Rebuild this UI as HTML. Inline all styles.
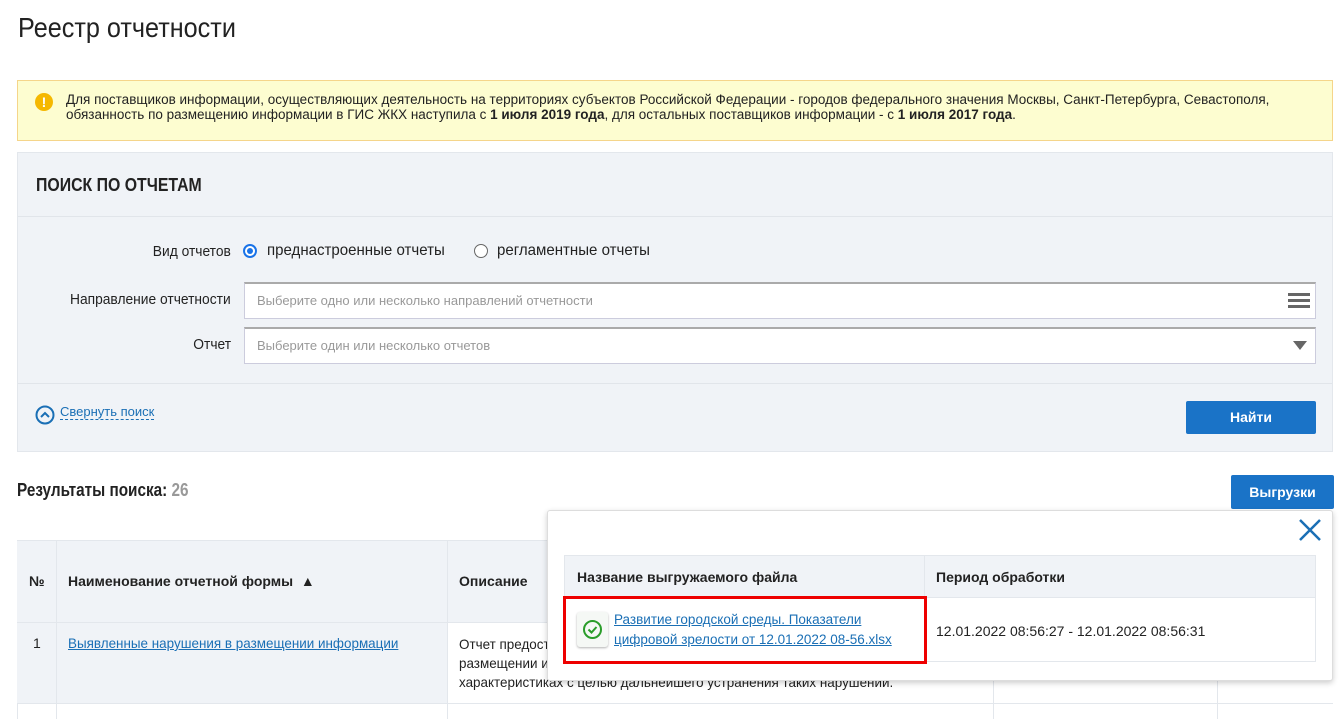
<!DOCTYPE html>
<html><head><meta charset="utf-8"><style>
*{box-sizing:border-box;margin:0;padding:0}
body{width:1342px;height:719px;overflow:hidden;background:#fff;font-family:"Liberation Sans",sans-serif;color:#222;position:relative;font-size:14px}
.a{position:absolute}
a{color:#1a6fb5}
.lbl{position:absolute;right:1111px;font-size:15px;transform:scaleX(.92);transform-origin:right;white-space:nowrap}
</style></head><body>
<div class="a" style="left:18px;top:12px;font-size:28px;transform:scaleX(.9);transform-origin:left">Реестр отчетности</div>
<div class="a" style="left:17px;top:80px;width:1316px;height:61px;background:#fdfdd0;border:1px solid #f5d58a"></div>
<div class="a" style="left:35px;top:93px;width:18px;height:18px;border-radius:50%;background:#f5b800;color:#fff;font-weight:bold;font-size:14px;text-align:center;line-height:18px">!</div>
<div class="a" style="left:66px;top:92px;font-size:13.5px;line-height:15px;width:1260px">Для поставщиков информации, осуществляющих деятельность на территориях субъектов Российской Федерации - городов федерального значения Москвы, Санкт-Петербурга, Севастополя, обязанность по размещению информации в ГИС ЖКХ наступила с <b>1 июля 2019 года</b>, для остальных поставщиков информации - с <b>1 июля 2017 года</b>.</div>
<div class="a" style="left:17px;top:152px;width:1316px;height:300px;background:#f0f3f7;border:1px solid #e3e7ec"></div>
<div class="a" style="left:18px;top:216px;width:1314px;height:1px;background:#e1e5ea"></div>
<div class="a" style="left:18px;top:383px;width:1314px;height:1px;background:#e1e5ea"></div>
<div class="a" style="left:36px;top:175px;font-size:18px;font-weight:bold;transform:scaleX(.88);transform-origin:left">ПОИСК ПО ОТЧЕТАМ</div>
<div class="lbl" style="top:243px">Вид отчетов</div>
<div class="a" style="left:243px;top:244px;width:14px;height:14px;border-radius:50%;border:2px solid #1a73e8;background:#fff"><div style="margin:2px;width:6px;height:6px;border-radius:50%;background:#1a73e8"></div></div>
<div class="a" style="left:267px;top:242px;font-size:16px;transform:scaleX(.94);transform-origin:left">преднастроенные отчеты</div>
<div class="a" style="left:474px;top:244px;width:14px;height:14px;border-radius:50%;border:1px solid #666;background:#fff"></div>
<div class="a" style="left:497px;top:242px;font-size:16px;transform:scaleX(.94);transform-origin:left">регламентные отчеты</div>
<div class="lbl" style="top:291px">Направление отчетности</div>
<div class="a" style="left:244px;top:282px;width:1072px;height:37px;background:#fff;border:1px solid #ccd;border-top:2px solid #aaa"></div>
<div class="a" style="left:257px;top:293px;font-size:13px;color:#999">Выберите одно или несколько направлений отчетности</div>
<div class="a" style="left:1288px;top:293px;width:22px;height:3px;background:#666;box-shadow:0 6px 0 #666,0 12px 0 #666"></div>
<div class="lbl" style="top:336px">Отчет</div>
<div class="a" style="left:244px;top:327px;width:1072px;height:37px;background:#fff;border:1px solid #ccd;border-top:2px solid #aaa"></div>
<div class="a" style="left:257px;top:338px;font-size:13px;color:#999">Выберите один или несколько отчетов</div>
<div class="a" style="left:1293px;top:341px;border-left:7px solid transparent;border-right:7px solid transparent;border-top:9px solid #666"></div>
<svg class="a" style="left:35px;top:405px" width="20" height="20"><circle cx="10" cy="10" r="8.5" fill="none" stroke="#1a6fb5" stroke-width="2"/><path d="M6 12l4-4 4 4" fill="none" stroke="#1a6fb5" stroke-width="2"/></svg>
<div class="a" style="left:60px;top:404px;font-size:13px;color:#1a6fb5;border-bottom:1px dashed #1a6fb5">Свернуть поиск</div>
<div class="a" style="left:1186px;top:401px;width:130px;height:33px;background:#1a73c7;border-radius:2px;color:#fff;font-weight:bold;font-size:14px;text-align:center;line-height:33px">Найти</div>
<div class="a" style="left:17px;top:480px;font-size:18px;font-weight:bold;transform:scaleX(.85);transform-origin:left">Результаты поиска: <span style="color:#999">26</span></div>
<div class="a" style="left:1231px;top:475px;width:103px;height:34px;background:#1a73c7;border-radius:2px;color:#fff;font-weight:bold;font-size:14px;text-align:center;line-height:34px">Выгрузки</div>
<div class="a" style="left:17px;top:540px;width:1316px;height:179px;border-left:1px solid #e3e7ec"></div>
<div class="a" style="left:17px;top:540px;width:1316px;height:83px;background:#f0f3f7;border-top:1px solid #e3e7ec;border-bottom:1px solid #e3e7ec"></div>
<div class="a" style="left:17px;top:623px;width:430px;height:80px;background:#f0f3f7"></div>
<div class="a" style="left:17px;top:703px;width:1316px;height:1px;background:#e3e7ec"></div>
<div class="a" style="left:56px;top:540px;width:1px;height:179px;background:#e3e7ec"></div>
<div class="a" style="left:447px;top:540px;width:1px;height:179px;background:#e3e7ec"></div>
<div class="a" style="left:993px;top:540px;width:1px;height:179px;background:#e3e7ec"></div>
<div class="a" style="left:1217px;top:540px;width:1px;height:179px;background:#e3e7ec"></div>
<div class="a" style="left:29px;top:573px;font-weight:bold;font-size:14px">№</div>
<div class="a" style="left:68px;top:573px;font-weight:bold;font-size:14px">Наименование отчетной формы <span style="font-size:14px">&nbsp;▲</span></div>
<div class="a" style="left:459px;top:573px;font-weight:bold;font-size:14px">Описание</div>
<div class="a" style="left:33px;top:635px;font-size:14px">1</div>
<div class="a" style="left:68px;top:635px;font-size:14px;transform:scaleX(.96);transform-origin:left"><a style="text-decoration:underline">Выявленные нарушения в размещении информации</a></div>
<div class="a" style="left:459px;top:635px;font-size:14px;line-height:19px;width:560px;transform:scaleX(.96);transform-origin:left">Отчет предоставляет информацию о выявленных нарушениях в<br>размещении информации поставщиками, о нарушенных<br>характеристиках с целью дальнейшего устранения таких нарушений.</div>
<div class="a" style="left:547px;top:510px;width:786px;height:171px;background:#fff;border:1px solid #ddd;border-radius:3px;box-shadow:0 2px 6px rgba(0,0,0,.2)"></div>
<svg class="a" style="left:1298px;top:518px" width="24" height="24"><path d="M2 2L22 22M22 2L2 22" stroke="#1a6fb5" stroke-width="2.5"/></svg>
<div class="a" style="left:564px;top:555px;width:752px;height:107px;border:1px solid #e3e7ec"></div>
<div class="a" style="left:565px;top:556px;width:750px;height:42px;background:#f0f3f7;border-bottom:1px solid #e3e7ec"></div>
<div class="a" style="left:924px;top:556px;width:1px;height:105px;background:#e3e7ec"></div>
<div class="a" style="left:577px;top:569px;font-weight:bold;font-size:14px">Название выгружаемого файла</div>
<div class="a" style="left:936px;top:569px;font-weight:bold;font-size:14px">Период обработки</div>
<div class="a" style="left:563px;top:596px;width:364px;height:68px;border:3px solid #e00"></div>
<div class="a" style="left:577px;top:612px;width:31px;height:35px;background:#f5f8f5;border-radius:3px;box-shadow:0 1px 2px rgba(0,0,0,.3)"></div>
<svg class="a" style="left:582px;top:619px" width="21" height="21"><circle cx="10.5" cy="10.5" r="8.5" fill="none" stroke="#2a9d2a" stroke-width="2"/><path d="M6.5 10.5l3 3 5-5.5" fill="none" stroke="#2a9d2a" stroke-width="2"/></svg>
<div class="a" style="left:614px;top:610px;font-size:13.5px;line-height:20px"><a style="text-decoration:underline">Развитие городской среды. Показатели<br>цифровой зрелости от 12.01.2022 08-56.xlsx</a></div>
<div class="a" style="left:936px;top:623px;font-size:14px">12.01.2022 08:56:27 - 12.01.2022 08:56:31</div>
</body></html>
